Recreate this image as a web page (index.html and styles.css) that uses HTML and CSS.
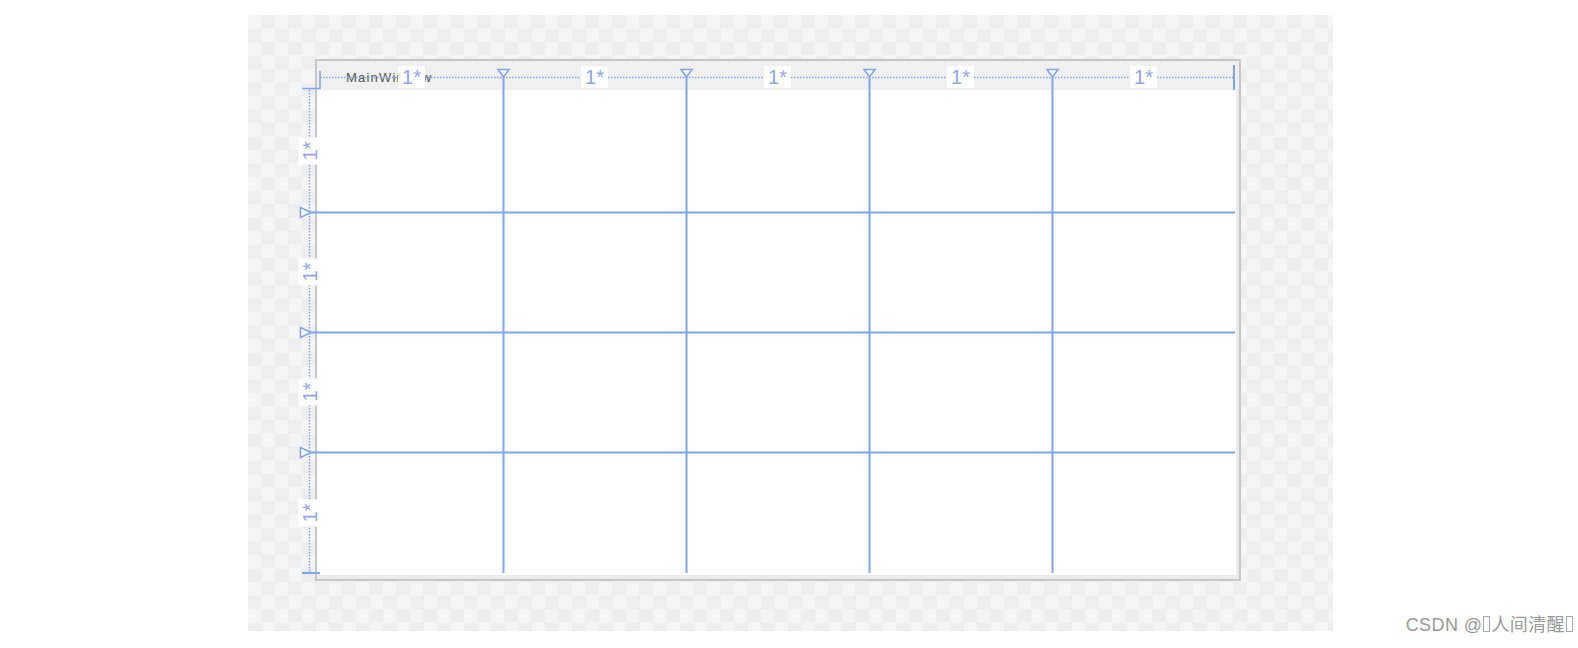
FILE: index.html
```html
<!DOCTYPE html>
<html lang="zh">
<head>
  <meta charset="UTF-8" />
  <title>MainWindow – Grid</title>
  <link rel="stylesheet" href="styles.css">
</head>
<body>
  <div class="page">
    <div class="canvas">
      <div class="window">
        <div class="titlebar"><span class="title">MainWindow</span></div>
        <div class="client"></div>

        <!-- grid adornments drawn by the designer -->
        <svg class="guides" viewBox="295 59 946 522" width="946" height="522">
          <g stroke="#7fa5f0" stroke-width="1.5" fill="none">
            <path d="M320 77.5H1234" stroke-dasharray="1.5 1.5" />
            <path d="M309.5 90V573" stroke-dasharray="1.5 1.5" />
            <path d="M320 71V88.5H302" />
            <path d="M1234 65V90" stroke-width="2" />
            <path d="M302 573H320" stroke-width="2" />
            <path d="M503.5 77V573M686.5 77V573M869.5 77V573M1052.5 77V573" stroke-width="2" />
            <path d="M311 212.5H1235M311 332.5H1235M311 452.5H1235" stroke-width="2" />
          </g>
          <g stroke="#7fa5f0" stroke-width="1.6" fill="#fff">
            <path d="M498 69.5H509L503.5 77Z" />
            <path d="M681 69.5H692L686.5 77Z" />
            <path d="M864 69.5H875L869.5 77Z" />
            <path d="M1047 69.5H1058L1052.5 77Z" />
            <path d="M300.5 207.5V217.5L311 212.5Z" />
            <path d="M300.5 327.5V337.5L311 332.5Z" />
            <path d="M300.5 447.5V457.5L311 452.5Z" />
          </g>
        </svg>

        <div class="col-ruler">
          <div class="cell"><span class="size">1*</span></div>
          <div class="cell"><span class="size">1*</span></div>
          <div class="cell"><span class="size">1*</span></div>
          <div class="cell"><span class="size">1*</span></div>
          <div class="cell"><span class="size">1*</span></div>
        </div>

        <div class="row-ruler">
          <div class="cell"><span class="size turned">1*</span></div>
          <div class="cell"><span class="size turned">1*</span></div>
          <div class="cell"><span class="size turned">1*</span></div>
          <div class="cell"><span class="size turned">1*</span></div>
        </div>
      </div>
    </div>

    <div class="watermark">CSDN @<span class="tofu"></span>人间清醒<span class="tofu"></span></div>
  </div>
</body>
</html>
```

FILE: styles.css
```css
body {
  margin: 0;
  background: #fff;
  font-family: 'Liberation Sans', Arial, sans-serif;
}

.page {
  width: 1578px;
  height: 648px;
  display: flex;
  align-items: flex-start;
  overflow: hidden;
}

.canvas {
  margin: 15px 0 0 248px;
  width: 1085px;
  height: 616px;
  padding: 44px 0 0 67px;
  box-sizing: border-box;
  background: repeating-conic-gradient(#eeeeee 0 25%, #f5f5f5 0 50%) 0 0 / 27px 27px;
}

.window {
  position: relative;
  width: 926px;
  height: 522px;
  box-sizing: border-box;
  border: 2px solid #c6c6c6;
  background: #ececec;
  display: flex;
  flex-direction: column;
}

.titlebar {
  height: 29px;
  background: #f0f0f0;
  display: flex;
  align-items: center;
  padding: 4px 0 0 29px;
  box-sizing: border-box;
}

.title {
  font-size: 13px;
  letter-spacing: 1.2px;
  color: #555;
}

.client {
  flex: 1;
  background: #fff;
  margin: 0 3px 4px 0;
}

.guides {
  position: absolute;
  left: -22px;
  top: -2px;
}

.col-ruler {
  position: absolute;
  left: 3px;
  top: 5px;
  width: 915px;
  height: 22px;
  display: flex;
}

.row-ruler {
  position: absolute;
  left: -19px;
  top: 30px;
  width: 24px;
  height: 482px;
  display: flex;
  flex-direction: column;
}

.cell {
  flex: 1;
  display: flex;
  align-items: center;
  justify-content: center;
}

.size {
  display: block;
  background: #fff;
  color: #8ea6ee;
  font-family: 'Liberation Sans', Arial, sans-serif;
  font-size: 20px;
  line-height: 22px;
  padding: 0 4px;
  white-space: nowrap;
}

.size.turned {
  transform: rotate(-90deg);
  line-height: 24px;
}

.watermark {
  align-self: flex-end;
  margin: 0 4px 12px auto;
  font-family: 'Liberation Sans', 'Noto Sans CJK SC', sans-serif;
  font-size: 18px;
  letter-spacing: 0.4px;
  color: #999;
  white-space: nowrap;
}

.tofu {
  display: inline-block;
  width: 5px;
  height: 14px;
  border: 1px solid #aaa;
  margin: 0 1px;
  vertical-align: -1px;
}
```
